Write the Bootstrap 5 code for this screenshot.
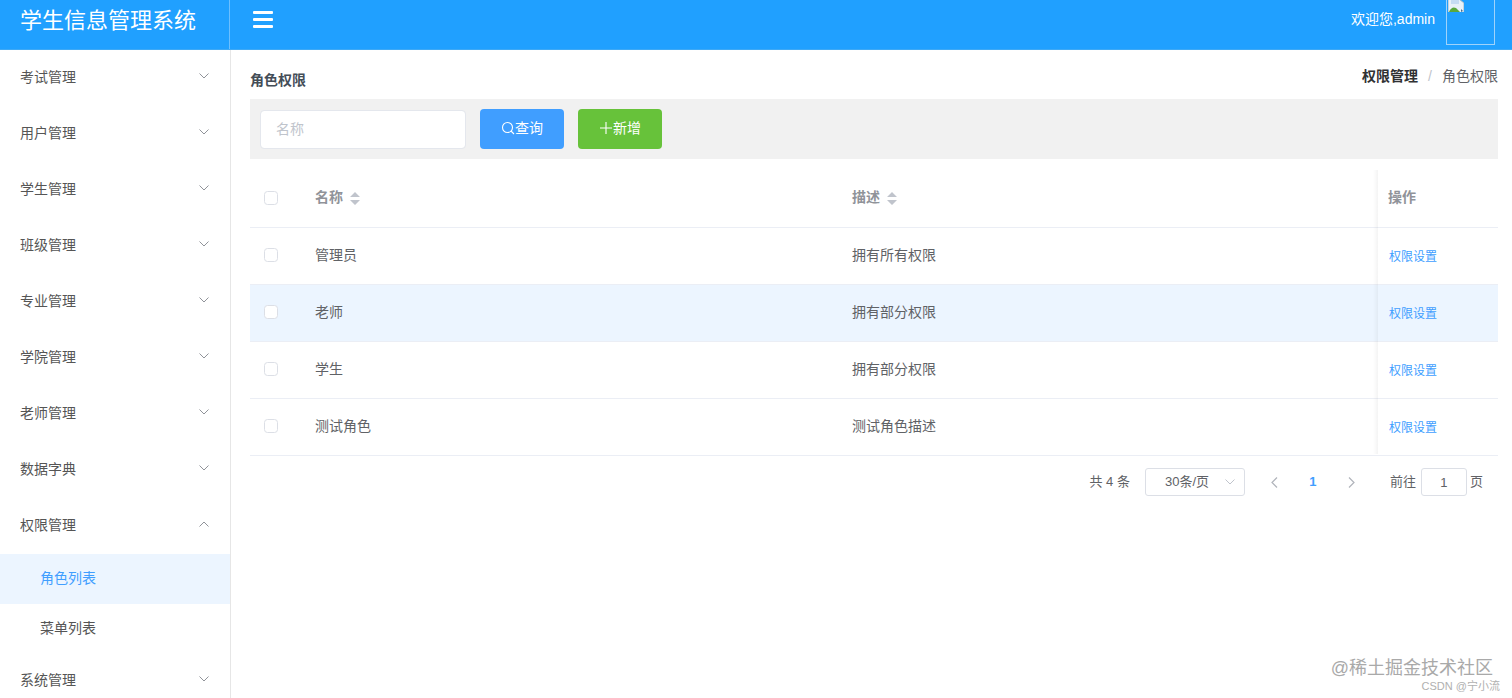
<!DOCTYPE html>
<html lang="zh-CN">
<head>
  <meta charset="UTF-8" />
  <title>学生信息管理系统</title>
  <link href="https://cdn.jsdelivr.net/npm/bootstrap@5.3.3/dist/css/bootstrap.min.css" rel="stylesheet">
  <style>
    html, body { height: 698px; overflow: hidden; }
    body { font-family: "Liberation Sans", "Noto Sans CJK SC", sans-serif; font-size: 14px; color: #606266; background: #fff; position: relative; }
    .top-bar { height: 50px; background: #20a0ff; color: #fff; padding: 0; flex-wrap: nowrap; align-items: stretch; border-bottom: 1px solid #3fa9f5; }
    .brand-box { width: 230px; padding-left: 20px; font-size: 22px; line-height: 41px; border-right: 1px solid #6cbfff; flex: none; }
    .menu-toggle { margin: 11px 0 0 23px; width: 20px; height: 17px; display: flex; flex-direction: column; justify-content: space-between; }
    .menu-toggle i { display: block; height: 3px; background: #fff; border-radius: 1px; }
    .user-box { margin-left: auto; padding-right: 17px; display: flex; gap: 11px; }
    .user-box span { line-height: 38px; font-size: 14px; }
    .avatar-box { width: 49px; height: 46px; border: 1px solid #9fd3fb; border-top: 0; margin-top: -1px; overflow: hidden; }
    .avatar-box svg { display: block; margin-left: 1px; }
    .main-wrap { height: 648px; }
    .side-menu { width: 231px; flex: none; border-right: 1px solid #e6e6e6; overflow: hidden; height: 648px; }
    #side-list { margin-top: -1px; }
    .side-item { height: 56px; padding: 0 20px; margin: 0; border: 0; color: #555; background: #fff; font-size: 14px; display: flex; align-items: center; justify-content: space-between; }
    .side-item svg { margin-right: 1px; margin-top: -2px; }
    .side-sub { height: 50px; padding: 0 40px 2px; border: 0; font-size: 14px; color: #555; display: flex; align-items: center; }
    .side-sub.on { background: #ecf5ff; color: #409eff; margin-top: 1px; }
    .side-sub.last { margin-bottom: -2px; }
    .content-box { flex: 1; padding: 0 14px 0 19px; min-width: 0; }
    .title-line { height: 49px; display: flex; justify-content: space-between; }
    .title-line b { color: #444d57; font-size: 14px; line-height: 20px; margin-top: 20px; }
    .crumb-line { margin: 16px 0 0 0; --bs-breadcrumb-divider: "/"; --bs-breadcrumb-item-padding-x: 10px; font-size: 14px; line-height: 20px; }
    .crumb-line .breadcrumb-item b { color: #303133; }
    .crumb-line .breadcrumb-item.active { color: #606266; }
    .crumb-line .breadcrumb-item + .breadcrumb-item::before { color: #c0c4cc; }
    .tool-bar { height: 60px; background: #f1f1f1; padding: 10px; gap: 14px; align-items: flex-start; margin-bottom: 11px; }
    .name-input { width: 206px; height: 39px; border: 1px solid #e4e7ed; border-radius: 4px; padding: 0 15px 2px; font-size: 14px; margin-top: 1px; }
    .name-input::placeholder { color: #c0c4cc; }
    .act-btn { width: 84px; height: 40px; padding: 0 0 2px; border: 0; border-radius: 4px; color: #fff; font-size: 14px; display: flex; align-items: center; justify-content: center; }
    .act-blue, .act-blue:hover { background: #409eff; color: #fff; }
    .act-green, .act-green:hover { background: #67c23a; color: #fff; }
    .table-wrap { position: relative; }
    .table-wrap::after { content: ""; position: absolute; left: 1123px; width: 5px; top: 0; bottom: 2px; background: linear-gradient(to right, rgba(0,0,0,0), rgba(0,0,0,.045)); pointer-events: none; }
    .role-table { table-layout: fixed; width: 1248px; margin: 0; border-collapse: separate; border-spacing: 0; }
    .role-table th, .role-table td { padding: 0 10px 2px; height: 57px; vertical-align: middle; border-bottom: 1px solid #ebeef5; color: #606266; font-size: 14px; box-shadow: none; background: transparent; }
    .role-table th { color: #909399; font-weight: 700; height: 58px; }
    .role-table tr.hovered td { background: #ecf5ff; }
    .role-table td.col-fixed { padding: 0 10px 0 11px; }
    .role-table a { color: #409eff; font-size: 12px; text-decoration: none; }
    .tick-box { width: 14px; height: 14px; margin: 0 0 0 4px; border: 1px solid #dcdfe6; border-radius: 2px; display: block; float: none; }
    .sort-mark { display: inline-block; margin-left: 7px; vertical-align: -1px; }
    .pager-line { height: 52px; font-size: 13px; color: #606266; padding-right: 15px; justify-content: flex-end; align-items: center; }
    .size-box { width: 100px; height: 28px; margin: 0 15px 0 15px; border: 1px solid #dcdfe6; border-radius: 3px; display: flex; align-items: center; justify-content: space-between; padding: 0 9px 0 19px; }
    .page-arrow { width: 30px; display: flex; justify-content: center; }
    .page-cur { width: 48px; margin-left: -1px; text-align: center; color: #409eff; font-weight: 700; font-size: 13px; }
    .go-text { margin-left: 23px; }
    .jump-box { width: 46px; height: 28px; margin: 0 3px 0 5px; border: 1px solid #dcdfe6; border-radius: 3px; padding: 0; text-align: center; font-size: 13px; color: #606266; }
    .mark-main { position: absolute; right: 19px; top: 656px; font-size: 18px; line-height: 24px; color: #a9a9a9; }
    .mark-sub { position: absolute; right: 12px; top: 679px; font-size: 11px; line-height: 14px; color: #b0b0b0; }
  </style>
</head>
<body>

<nav class="navbar top-bar">
  <div class="brand-box">学生信息管理系统</div>
  <div class="menu-toggle"><i></i><i></i><i></i></div>
  <div class="user-box">
    <span>欢迎您,admin</span>
    <div class="avatar-box">
      <svg width="16" height="13" viewBox="0 0 16 13">
        <path d="M0 0h11l5 4v9H0z" fill="#e8f1f8"/>
        <path d="M0 0v13M11 0l5 4v9" fill="none" stroke="#9fb4c4" stroke-width="1"/>
        <path d="M3 1h8v4H3z" fill="#c6dcf2"/>
        <path d="M1 13c2-5 6-6 9-2l2 2z" fill="#5aa83c"/>
        <path d="M13 10l2 2-2 1z" fill="#4a6f8c"/>
      </svg>
    </div>
  </div>
</nav>

<div class="d-flex main-wrap">
  <!-- 左侧菜单 -->
  <div class="side-menu">
    <div class="list-group list-group-flush" id="side-list"></div>
  </div>

  <!-- 内容 -->
  <div class="content-box">
    <div class="title-line">
      <b>角色权限</b>
      <ol class="breadcrumb crumb-line">
        <li class="breadcrumb-item"><b>权限管理</b></li>
        <li class="breadcrumb-item active">角色权限</li>
      </ol>
    </div>

    <div class="d-flex tool-bar">
      <input type="text" class="form-control name-input" placeholder="名称">
      <button class="btn act-btn act-blue">
        <svg width="14" height="14" viewBox="0 0 14 14" fill="none" stroke="#fff" stroke-width="1.1"><circle cx="6.5" cy="6.5" r="5"/><path d="M10 10l3 3"/></svg>查询
      </button>
      <button class="btn act-btn act-green">
        <svg width="14" height="14" viewBox="0 0 14 14" fill="none" stroke="#fff" stroke-width="1.1"><path d="M7 1v12M1 7h12"/></svg>新增
      </button>
    </div>

    <div class="table-wrap">
      <table class="table role-table">
        <colgroup><col style="width:55px"><col style="width:537px"><col style="width:536px"><col style="width:120px"></colgroup>
        <thead>
          <tr>
            <th><input class="form-check-input tick-box" type="checkbox"></th>
            <th>名称<span class="sort-mark"><svg width="10" height="13" viewBox="0 0 10 13" fill="#c0c4cc"><path d="M5 0l5 5H0zM5 13L0 8h10z"/></svg></span></th>
            <th>描述<span class="sort-mark"><svg width="10" height="13" viewBox="0 0 10 13" fill="#c0c4cc"><path d="M5 0l5 5H0zM5 13L0 8h10z"/></svg></span></th>
            <th>操作</th>
          </tr>
        </thead>
        <tbody id="role-rows"></tbody>
      </table>
    </div>

    <div class="d-flex pager-line">
      <span>共 4 条</span>
      <div class="size-box">
        <span>30条/页</span>
        <svg width="10" height="6" viewBox="0 0 10 6" fill="none" stroke="#c0c4cc"><path d="M.5.5L5 5 9.500.5"/></svg>
      </div>
      <span class="page-arrow"><svg width="7" height="11" viewBox="0 0 7 11" fill="none" stroke="#b0b4bb" stroke-width="1.2"><path d="M6 .5L1 5.500l5 5"/></svg></span>
      <span class="page-cur">1</span>
      <span class="page-arrow"><svg width="7" height="11" viewBox="0 0 7 11" fill="none" stroke="#b0b4bb" stroke-width="1.2"><path d="M1 .5l5 5-5 5"/></svg></span>
      <span class="go-text">前往</span>
      <input class="form-control jump-box" value="1">
      <span>页</span>
    </div>
  </div>
</div>

<div class="mark-main">@稀土掘金技术社区</div>
<div class="mark-sub">CSDN @宁小流</div>

<script>
  const chevDown = '<svg width="10" height="6" viewBox="0 0 10 6" fill="none" stroke="#909399"><path d="M.5.5L5 5 9.500.5"/></svg>';
  const chevUp = '<svg width="10" height="6" viewBox="0 0 10 6" fill="none" stroke="#909399"><path d="M.5 5.500L5 1l4.500 4.500"/></svg>';

  const menus = ['考试管理', '用户管理', '学生管理', '班级管理', '专业管理', '学院管理', '老师管理', '数据字典', '权限管理', '系统管理'];
  const sideList = document.getElementById('side-list');
  menus.forEach(name => {
    const open = name === '权限管理';
    sideList.insertAdjacentHTML('beforeend',
      `<div class="list-group-item side-item"><span>${name}</span>${open ? chevUp : chevDown}</div>`);
    if (open) {
      sideList.insertAdjacentHTML('beforeend', '<div class="list-group-item side-sub on">角色列表</div>');
      sideList.insertAdjacentHTML('beforeend', '<div class="list-group-item side-sub last">菜单列表</div>');
    }
  });

  const roles = [
    ['管理员', '拥有所有权限'],
    ['老师', '拥有部分权限'],
    ['学生', '拥有部分权限'],
    ['测试角色', '测试角色描述']
  ];
  const rows = document.getElementById('role-rows');
  roles.forEach((r, i) => {
    rows.insertAdjacentHTML('beforeend', `<tr class="${i === 1 ? 'hovered' : ''}">
      <td><input class="form-check-input tick-box" type="checkbox"></td>
      <td>${r[0]}</td>
      <td>${r[1]}</td>
      <td class="col-fixed"><a href="#">权限设置</a></td>
    </tr>`);
  });
</script>
<script src="https://cdn.jsdelivr.net/npm/bootstrap@5.3.3/dist/js/bootstrap.bundle.min.js"></script>
</body>
</html>
